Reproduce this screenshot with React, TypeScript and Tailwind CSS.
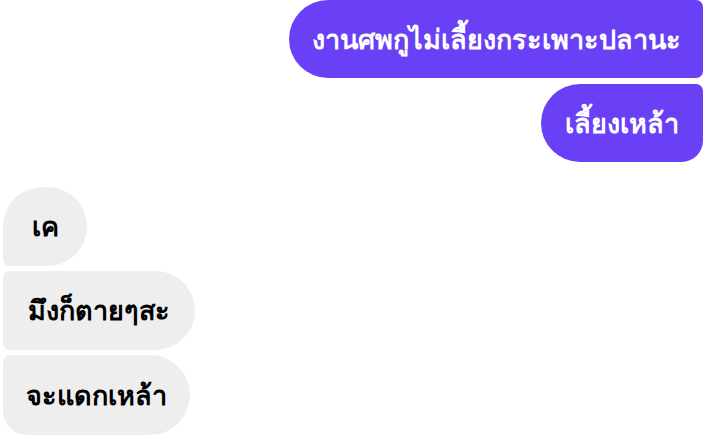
export default function App() {
  return (
    <div className="w-[719px] h-[445px] overflow-hidden bg-white font-['Noto_Sans',sans-serif] font-bold text-[27px]">
      <div className="flex flex-col items-end gap-[6px] pr-[16px]">
        <div className="bg-[#6a40f6] text-white rounded-[40px] rounded-tr-[7px] rounded-br-[7px] px-[22.5px] h-[78px] flex items-center">
          งานศพกูไม่เลี้ยงกระเพาะปลานะ
        </div>
        <div className="bg-[#6a40f6] text-white rounded-[40px] rounded-tr-[7px] rounded-br-[22px] px-[24px] h-[78px] flex items-center">
          เลี้ยงเหล้า
        </div>
      </div>

      <div className="flex flex-col items-start gap-[5px] pl-[3px] mt-[25px]">
        <div className="bg-[#eeeeee] text-black rounded-[40px] rounded-bl-[7px] px-[28.5px] h-[79px] flex items-center">
          เค
        </div>
        <div className="bg-[#eeeeee] text-black rounded-[40px] rounded-tl-[7px] rounded-bl-[7px] px-[25px] h-[79px] flex items-center">
          มึงก็ตายๆสะ
        </div>
        <div className="bg-[#eeeeee] text-black rounded-[40px] rounded-tl-[7px] rounded-bl-[24px] px-[23px] h-[80px] flex items-center">
          จะแดกเหล้า
        </div>
      </div>
    </div>
  );
}
